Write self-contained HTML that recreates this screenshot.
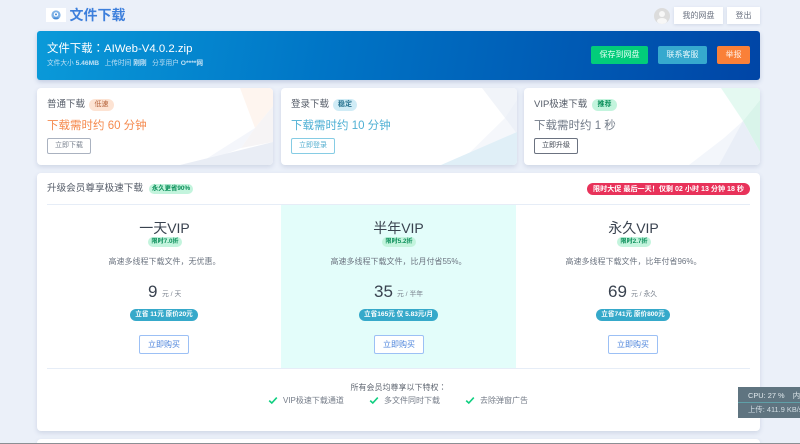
<!DOCTYPE html>
<html><head><meta charset="utf-8">
<style>
*{box-sizing:border-box;margin:0;padding:0}
html,body{width:800px;height:444px;overflow:hidden;background:#ebf0f9;font-family:"Liberation Sans","Noto Sans CJK SC",sans-serif;color:#4a5568}
#w{position:absolute;left:0;top:0;width:800px;height:444px;overflow:hidden;background:#ebf0f9;filter:blur(.3px)}
.a{position:absolute;white-space:nowrap}
.c{text-align:center}
.card{background:#fff;border-radius:4px;box-shadow:0 2px 5px rgba(60,80,130,.16);overflow:hidden}
.btn{display:block;text-align:center;border-radius:2px}
.top{background:#fff;box-shadow:0 1px 3px rgba(60,80,130,.15);color:#6b7280;font-size:8px;line-height:17px;height:17px}
.tag{border-radius:7px;font-size:7px;line-height:12px;height:12px;text-align:center}
.g{background:#c3f4dd;color:#0b8f5a;font-weight:bold}
.ct{font-size:9.5px;color:#555c68;line-height:14px}
.pr{font-size:11.5px;line-height:16px}
.cb{height:16px;line-height:14px;font-size:7px;text-align:center;border:1px solid;border-radius:2px;background:#fff}
.vip{font-size:14px;color:#39424f;line-height:18px;text-align:center;width:235px}
.d{font-size:8px;color:#6c7480;line-height:12px;text-align:center;width:235px}
.p{font-size:17px;color:#39424f;line-height:20px}
.u{font-size:6.8px;color:#7a828e;line-height:10px}
.s{background:#36a9ca;color:#fff;font-size:6.6px;font-weight:bold;line-height:12px;height:12px;border-radius:6px;text-align:center}
.b{height:19px;line-height:17px;width:50px;border:1px solid #9cc0f5;border-radius:2px;color:#4f86dc;font-size:8px;text-align:center;background:#fff}
.f{font-size:8px;color:#757c88;line-height:12px}
.cj{font-family:"Noto Sans CJK TC",sans-serif}
</style></head><body><div id="w">

<!-- header -->
<div class="a" style="left:46px;top:8px;width:20px;height:14px;background:#fff"></div>
<svg class="a" style="left:50px;top:9px" width="12" height="12" viewBox="0 0 12 12"><circle cx="6" cy="6" r="4.6" fill="#7fb2e6"/><circle cx="6" cy="5.4" r="2.2" fill="#fff"/><circle cx="6" cy="5.4" r="1" fill="#3f86d4"/><rect x="3.4" y="8.5" width="5.2" height="1.4" fill="#3f86d4"/></svg>
<div class="a" style="left:69.5px;top:6px;font-size:14px;line-height:18px;font-weight:bold;color:#3d7fdc">文件下载</div>
<svg class="a" style="left:654px;top:8px" width="16" height="16" viewBox="0 0 16 16"><circle cx="8" cy="8" r="8" fill="#dcdcdc"/><circle cx="8" cy="6" r="3" fill="#f7f7f7"/><ellipse cx="8" cy="13" rx="5" ry="3" fill="#f7f7f7"/></svg>
<div class="a top c" style="left:674px;top:7px;width:49px">我的网盘</div>
<div class="a top c" style="left:727px;top:7px;width:33px">登出</div>

<!-- hero -->
<div class="a" style="left:37px;top:31px;width:723px;height:49px;border-radius:3px;background:linear-gradient(100deg,#0a9ad9 0%,#0075c6 40%,#0045a6 100%);box-shadow:0 2px 5px rgba(30,60,130,.2)"></div>
<div class="a" style="left:47px;top:40px;color:#fff;font-size:11.4px;line-height:16px">文件下载<span class="cj">：</span>AIWeb-V4.0.2.zip</div>
<div class="a" style="left:47px;top:58.5px;color:#bfe0f4;font-size:6.7px;line-height:10px">文件大小 <b>5.46MB</b>&nbsp;&nbsp; 上传时间 <b>刚刚</b>&nbsp;&nbsp; 分享用户 <b>O****网</b></div>
<div class="a btn" style="left:591px;top:46px;width:57px;height:18px;background:#02cc7a;color:#e6fff4;font-size:8px;line-height:18px">保存到网盘</div>
<div class="a btn" style="left:658px;top:46px;width:49px;height:18px;background:#36a9ce;color:#e6f7fc;font-size:8px;line-height:18px">联系客服</div>
<div class="a btn" style="left:717px;top:46px;width:33px;height:18px;background:#fa8038;color:#fff0e6;font-size:8px;line-height:18px">举报</div>

<!-- card 1 -->
<div class="a card" style="left:37px;top:88px;width:236px;height:77px">
<svg class="a" style="left:0;top:0" width="236" height="77"><polygon points="203,0 236,0 236,18 218,40" fill="#fef5ef"/><polygon points="218,40 236,18 236,54 204,60" fill="#f6f4f5"/><polygon points="218,40 204,60 160,77 180,64" fill="#f4f6fb"/><polygon points="143,77 236,54 236,77" fill="#e9edf5"/></svg>
</div>
<div class="a ct" style="left:47px;top:97.5px">普通下载</div>
<div class="a tag" style="left:89px;top:99px;width:25px;background:#fde3d3;color:#b5623a">低速</div>
<div class="a pr" style="left:47px;top:117.5px;color:#f58a4e">下载需时约 60 分钟</div>
<div class="a cb" style="left:47px;top:138px;width:44px;border-color:#aab2c0;color:#7b8390">立即下载</div>

<!-- card 2 -->
<div class="a card" style="left:281px;top:88px;width:236px;height:77px">
<svg class="a" style="left:0;top:0" width="236" height="77"><polygon points="201,0 236,0 236,46 224,30" fill="#f1f4f9"/><polygon points="224,30 236,12 236,46" fill="#edf1f8"/><polygon points="224,30 236,46 198,62 176,77" fill="#f5f7fb"/><polygon points="160,77 236,44 236,77" fill="#e0eff7"/></svg>
</div>
<div class="a ct" style="left:291px;top:97.5px">登录下载</div>
<div class="a tag" style="left:333px;top:99px;width:24px;background:#d0ecf6;color:#25718e;font-weight:bold">稳定</div>
<div class="a pr" style="left:291px;top:117.5px;color:#4fb0d4">下载需时约 10 分钟</div>
<div class="a cb" style="left:291px;top:138px;width:44px;border-color:#86cce4;color:#53aecf">立即登录</div>

<!-- card 3 -->
<div class="a card" style="left:524px;top:88px;width:236px;height:77px">
<svg class="a" style="left:0;top:0" width="236" height="77"><polygon points="197,0 236,0 236,12 219,33" fill="#e4f9f1"/><polygon points="219,33 236,12 236,64" fill="#d9f4ea"/><polygon points="219,33 195,77 165,77 200,50" fill="#f3f6fb"/><polygon points="219,33 236,64 236,77 195,77" fill="#e9eef7"/></svg>
</div>
<div class="a ct" style="left:534px;top:97.5px">VIP极速下载</div>
<div class="a tag" style="left:592px;top:99px;width:25px;background:#c3f4dd;color:#0b8f5a;font-weight:bold">推荐</div>
<div class="a pr" style="left:534px;top:117.5px;color:#727b88">下载需时约 1 秒</div>
<div class="a cb" style="left:534px;top:138px;width:44px;border-color:#6b7280;color:#3d4450">立即升级</div>

<!-- main -->
<div class="a card" style="left:37px;top:173px;width:723px;height:258px"></div>
<div class="a" style="left:47px;top:181.5px;font-size:9.6px;line-height:14px;color:#555c68">升级会员尊享极速下载</div>
<div class="a tag g" style="left:149px;top:184px;width:44px;height:10px;line-height:10px;font-size:6.4px;border-radius:5px">永久更省90%</div>
<div class="a" style="left:587px;top:183px;width:163px;height:12px;line-height:12px;border-radius:6px;background:#e8325a;color:#fff;font-size:7.1px;font-weight:bold;text-align:center">限时大促 最后一天！仅剩 02 小时 13 分钟 18 秒</div>
<div class="a" style="left:47px;top:204px;width:703px;height:1px;background:#e6edf7"></div>
<div class="a" style="left:281px;top:205px;width:235px;height:163px;background:#e3fdfa"></div>
<div class="a" style="left:47px;top:368px;width:703px;height:1px;background:#e6edf7"></div>

<div class="a vip" style="left:47px;top:218.5px">一天VIP</div>
<div class="a tag g" style="left:148px;top:237px;width:34px;height:10px;line-height:10px;font-size:6.2px;border-radius:5px">限时7.0折</div>
<div class="a d" style="left:47px;top:256px">高速多线程下载文件，无优惠。</div>
<div class="a p" style="left:148px;top:282px">9</div><div class="a u" style="left:162px;top:290px">元 / 天</div>
<div class="a s" style="left:130px;top:309px;width:68px">立省 11元 原价20元</div>
<div class="a b" style="left:139px;top:335px">立即购买</div>

<div class="a vip" style="left:281px;top:218.5px">半年VIP</div>
<div class="a tag g" style="left:382px;top:237px;width:34px;height:10px;line-height:10px;font-size:6.2px;border-radius:5px">限时5.2折</div>
<div class="a d" style="left:281px;top:256px">高速多线程下载文件，比月付省55%。</div>
<div class="a p" style="left:374px;top:282px">35</div><div class="a u" style="left:397px;top:290px">元 / 半年</div>
<div class="a s" style="left:359px;top:309px;width:79px">立省165元 仅 5.83元/月</div>
<div class="a b" style="left:374px;top:335px">立即购买</div>

<div class="a vip" style="left:516px;top:218.5px">永久VIP</div>
<div class="a tag g" style="left:617px;top:237px;width:34px;height:10px;line-height:10px;font-size:6.2px;border-radius:5px">限时2.7折</div>
<div class="a d" style="left:516px;top:256px">高速多线程下载文件，比年付省96%。</div>
<div class="a p" style="left:608px;top:282px">69</div><div class="a u" style="left:631px;top:290px">元 / 永久</div>
<div class="a s" style="left:596px;top:309px;width:74px">立省741元 原价800元</div>
<div class="a b" style="left:608px;top:335px">立即购买</div>

<div class="a f c" style="left:240px;top:381.5px;width:317px;color:#606772">所有会员均尊享以下特权<span class="cj">：</span></div>
<svg class="a" style="left:268px;top:396px" width="10" height="9" viewBox="0 0 10 9"><path d="M1.2 4.6 L3.8 7 L8.8 1.6" fill="none" stroke="#0fcf80" stroke-width="1.6"/></svg>
<div class="a f" style="left:283px;top:395px">VIP极速下载通道</div>
<svg class="a" style="left:369px;top:396px" width="10" height="9" viewBox="0 0 10 9"><path d="M1.2 4.6 L3.8 7 L8.8 1.6" fill="none" stroke="#0fcf80" stroke-width="1.6"/></svg>
<div class="a f" style="left:384px;top:395px">多文件同时下载</div>
<svg class="a" style="left:465px;top:396px" width="10" height="9" viewBox="0 0 10 9"><path d="M1.2 4.6 L3.8 7 L8.8 1.6" fill="none" stroke="#0fcf80" stroke-width="1.6"/></svg>
<div class="a f" style="left:480px;top:395px">去除弹窗广告</div>

<!-- next card -->
<div class="a card" style="left:37px;top:439px;width:723px;height:4px;border-radius:4px 4px 0 0"></div>
<div class="a" style="left:0;top:443px;width:800px;height:1px;background:#8b8f94"></div>

<!-- monitor -->
<div class="a" style="left:738px;top:387px;width:62px;height:31px;background:#5f7480;overflow:hidden">
<div class="a" style="left:10px;top:3px;font-size:7.4px;line-height:11px;color:#e2eaee">CPU: 27 % &nbsp;&nbsp;&nbsp;内存</div>
<div class="a" style="left:0;top:15px;width:62px;height:1px;background:#5fa0a8"></div>
<div class="a" style="left:10px;top:17px;font-size:7.4px;line-height:11px;color:#d2dde3">上传: 411.9 KB/s</div>
</div>
</div></body></html>
